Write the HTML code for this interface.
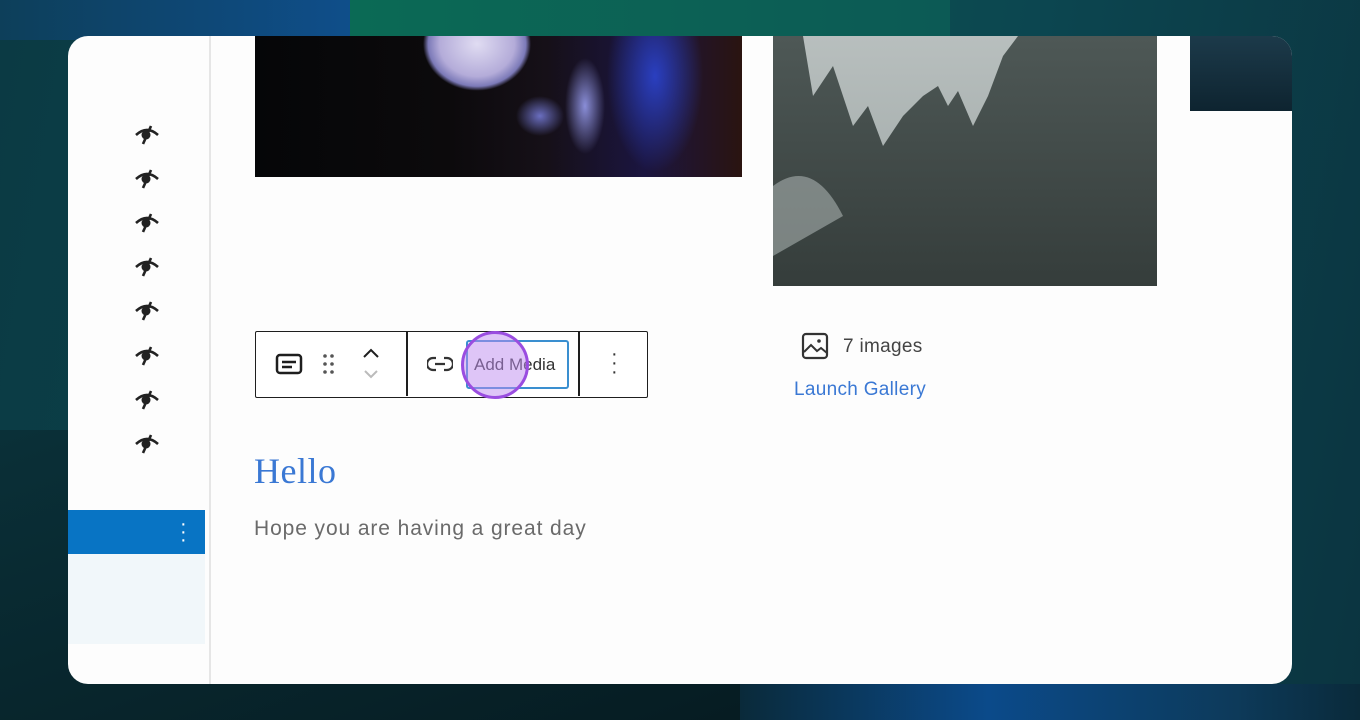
<!DOCTYPE html>
<html><head><style>
*{margin:0;padding:0;box-sizing:border-box}
body{width:1360px;height:720px;overflow:hidden;position:relative;font-family:"Liberation Sans",sans-serif;
background:linear-gradient(100deg,#0b3a44 0%,#0a4248 25%,#0a5552 45%,#0c4650 70%,#0b3440 100%);}
.bg1{position:absolute;left:0;top:0;width:350px;height:40px;background:linear-gradient(90deg,#0d3f5a,#0f4e8a);}
.bg1b{position:absolute;left:350px;top:0;width:600px;height:40px;background:linear-gradient(90deg,#0b6a55,#0c5a55);}
.bg2{position:absolute;left:740px;top:684px;width:620px;height:36px;background:linear-gradient(90deg,#0a2a3a,#0b4a8a 40%,#0d3a5a 80%,#0a2a3a);}
.bg3{position:absolute;left:0;top:430px;width:740px;height:290px;background:linear-gradient(160deg,#0a3038,#061c22);}
.card{position:absolute;left:68px;top:36px;width:1224px;height:648px;background:#fdfdfd;border-radius:20px;overflow:hidden}
.side{position:absolute;left:0;top:0;width:143px;height:648px;border-right:2px solid #e6e6e6}
.eye{position:absolute;left:66px;width:26px;height:22px}
.mic{position:absolute;left:187px;top:0;width:487px;height:141px;
background:radial-gradient(ellipse 75px 65px at 222px 8px,#e0dcf2 0%,#b4acd9 50%,#7c7ab8 65%,transparent 72%),
radial-gradient(ellipse 30px 25px at 285px 80px,#6a6ec0 0%,transparent 80%),
radial-gradient(ellipse 25px 60px at 330px 70px,#8a8ed8 0%,transparent 80%),
radial-gradient(ellipse 60px 120px at 400px 40px,#2a3fc0 0%,transparent 80%),
linear-gradient(90deg,#050608 0%,#0c0a0c 40%,#161018 60%,#1b1540 80%,#2a1410 100%);}
.mtn{position:absolute;left:705px;top:0;width:384px;height:250px;background:linear-gradient(180deg,#b8bfbe,#9aa3a2)}
.sm{position:absolute;left:1122px;top:0;width:102px;height:75px;background:linear-gradient(180deg,#1c3a4a,#0e2430)}
.tb{position:absolute;left:187px;top:295px;width:393px;height:67px;border:1.5px solid #1e1e1e;border-radius:2px;background:#fff}
.sep{position:absolute;top:0;width:1.5px;height:64px;background:#1e1e1e}
.am{position:absolute;left:398px;top:304px;width:103px;height:49px;border:2px solid #3a8fd0;border-radius:3px;font-size:17px;color:#333;line-height:45px;padding-left:6px}
.circ{position:absolute;left:393px;top:295px;width:68px;height:68px;border-radius:50%;border:3px solid #9a4de0;background:rgba(190,140,240,.5)}
.hello{position:absolute;left:186px;top:414px;font-family:"Liberation Serif",serif;font-size:36px;color:#3a78d4;letter-spacing:0.5px}
.hope{position:absolute;left:186px;top:481px;font-size:21px;color:#6a6a6a;letter-spacing:0.9px}
.sel{position:absolute;left:0;top:474px;width:137px;height:44px;background:#0874c4}
.sel2{position:absolute;left:0;top:518px;width:137px;height:90px;background:#f1f7fa}
</style></head><body>
<div class="bg3"></div><div class="bg1"></div><div class="bg1b"></div><div class="bg2"></div>
<div class="card">
<div class="side">
<svg width="0" height="0" style="position:absolute"><defs><symbol id="e" viewBox="0 0 26 22"><path d="M2 11 Q13 1 24 11" fill="none" stroke="#222" stroke-width="2.6"/><circle cx="12" cy="11" r="4.5" fill="#222"/><path d="M17 2 L9 20" stroke="#222" stroke-width="2.6"/></symbol></defs></svg>
<svg class="eye" style="top:88px"><use href="#e"/></svg>
<svg class="eye" style="top:132px"><use href="#e"/></svg>
<svg class="eye" style="top:176px"><use href="#e"/></svg>
<svg class="eye" style="top:220px"><use href="#e"/></svg>
<svg class="eye" style="top:264px"><use href="#e"/></svg>
<svg class="eye" style="top:309px"><use href="#e"/></svg>
<svg class="eye" style="top:353px"><use href="#e"/></svg>
<svg class="eye" style="top:397px"><use href="#e"/></svg>
<div class="sel"><div style="position:absolute;left:112px;top:10px;color:#fff;font-size:20px;line-height:8px">·<br>·<br>·</div></div>
<div class="sel2"></div>
</div>
<div class="mic"></div>
<div class="mtn"><svg width="384" height="250"><defs><linearGradient id="g" x1="0" y1="0" x2="0" y2="1"><stop offset="0" stop-color="#4e5856"/><stop offset="1" stop-color="#353d3b"/></linearGradient></defs>
<path d="M0 0 L30 0 L40 60 L60 30 L80 90 L95 70 L110 110 L130 80 L150 60 L165 50 L175 70 L185 55 L200 90 L215 60 L230 20 L245 0 L384 0 L384 250 L0 250 Z" fill="url(#g)"/>
<path d="M0 150 Q40 120 70 180 L0 220Z" fill="#a8b0af" opacity=".6"/></svg></div>
<div class="sm"></div>
<div class="tb">
<svg style="position:absolute;left:19px;top:20px" width="28" height="24"><rect x="2" y="3" width="24" height="18" rx="3" fill="none" stroke="#1e1e1e" stroke-width="2.5"/><path d="M7 10h14M7 15h10" stroke="#1e1e1e" stroke-width="2.5"/></svg>
<svg style="position:absolute;left:66px;top:20px" width="14" height="24" fill="#555"><circle cx="3" cy="4" r="1.8"/><circle cx="10" cy="4" r="1.8"/><circle cx="3" cy="12" r="1.8"/><circle cx="10" cy="12" r="1.8"/><circle cx="3" cy="20" r="1.8"/><circle cx="10" cy="20" r="1.8"/></svg>
<svg style="position:absolute;left:106px;top:14px" width="18" height="36"><path d="M2 11l7-7 7 7" fill="none" stroke="#1e1e1e" stroke-width="2"/><path d="M3 25l6 6 6-6" fill="none" stroke="#bbb" stroke-width="2"/></svg>
<div class="sep" style="left:150px"></div>
<svg style="position:absolute;left:171px;top:24px" width="26" height="16"><path d="M9 2H6a6 6 0 0 0 0 12h3M17 2h3a6 6 0 0 1 0 12h-3M8 8h10" fill="none" stroke="#333" stroke-width="2.2"/></svg>
<div class="sep" style="left:322px"></div>
<div style="position:absolute;left:355px;top:18px;color:#333;font-size:20px;line-height:9px">·<br>·<br>·</div>
</div>
<div class="am">Add Media</div>
<div class="circ"></div>
<svg style="position:absolute;left:733px;top:296px" width="30" height="28"><rect x="2" y="2" width="24" height="24" rx="3" fill="none" stroke="#333" stroke-width="2.2"/><path d="M3 20l7-7 6 6 4-3 6 5" fill="none" stroke="#333" stroke-width="2"/><circle cx="18" cy="9" r="1.8" fill="#333"/></svg>
<div style="position:absolute;left:775px;top:300px;font-size:19px;color:#444;letter-spacing:0.3px">7 images</div>
<div style="position:absolute;left:726px;top:343px;font-size:19px;color:#3a78d4;letter-spacing:0.3px">Launch Gallery</div>
<div class="hello">Hello</div>
<div class="hope">Hope you are having a great day</div>
</div>
</body></html>
